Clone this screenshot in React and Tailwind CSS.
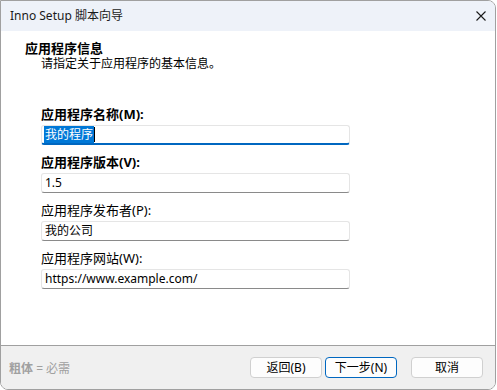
import React from "react";

const FONT = { fontFamily: '"Noto Sans", "Noto Sans CJK SC", sans-serif' };

const FIELDS = [
  { label: "应用程序名称", key: "(M):", value: "我的程序", bold: true, focused: true },
  { label: "应用程序版本", key: "(V):", value: "1.5", bold: true },
  { label: "应用程序发布者", key: "(P):", value: "我的公司" },
  { label: "应用程序网站", key: "(W):", value: "https://www.example.com/" },
];

function Field({ field }) {
  return (
    <div className="mb-[9px]">
      <div className={`h-[16px] leading-[16px] text-[13px] text-black ${field.bold ? "font-bold" : ""}`}>
        {field.label}
        <span className={field.bold ? "font-bold" : ""}>{field.key}</span>
      </div>
      <div
        className={`mt-[3px] h-[20px] w-[309px] rounded-[3px] border border-[#e5e5e5] bg-white flex items-center pl-[2px] text-[12px] text-black ${
          field.focused ? "border-b-2 border-b-[#0067c0]" : "border-b-[#8a8a8a]"
        }`}
      >
        {field.focused ? (
          <>
            <span className="bg-[#0078d7] text-white leading-[17px] px-px">{field.value}</span>
            <span className="w-px h-[15px] bg-black" />
          </>
        ) : (
          <span className="pl-[1px]">{field.value}</span>
        )}
      </div>
    </div>
  );
}

function Button({ children, primary }) {
  return (
    <button
      className={`w-[72px] h-[21px] rounded-[4px] bg-[#fdfdfd] text-[12px] text-black flex items-center justify-center border ${
        primary ? "border-[#0067c0]" : "border-[#d0d0d0]"
      }`}
    >
      {children}
    </button>
  );
}

export default function App() {
  return (
    <div className="w-[497px] h-[390px] bg-white" style={FONT}>
      <div className="w-[496px] h-[390px] flex flex-col border border-[#a0a0a0] rounded-tr-[8px] rounded-b-[8px] overflow-hidden">
        {/* Barre de titre */}
        <div className="h-[30px] bg-[#eef2f9] flex items-center justify-between pl-[9px] pr-[8px]">
          <span className="text-[12px] text-[#1a1a1a]">Inno Setup 脚本向导</span>
          <svg width="10" height="10" viewBox="0 0 10 10" className="mr-[1px] mb-[1px]">
            <path d="M0.5 0.5 L9.5 9.5 M9.5 0.5 L0.5 9.5" stroke="#1a1a1a" strokeWidth="1.1" fill="none" />
          </svg>
        </div>

        {/* Contenu */}
        <div className="h-[314px] bg-white">
          <div className="pl-[24px] pt-[9px]">
            <div className="text-[13px] leading-[16px] font-bold text-black">应用程序信息</div>
            <div className="pl-[16px] text-[12px] leading-[16px] text-black">请指定关于应用程序的基本信息。</div>
          </div>
          <div className="pl-[40px] pt-[34px]">
            {FIELDS.map((f) => (
              <Field key={f.key} field={f} />
            ))}
          </div>
        </div>

        {/* Pied */}
        <div className="h-[44px] border-t border-[#a0a0a0] bg-[#f0f0f0] flex items-center justify-between pl-[8px] pr-[12px]">
          <span className="text-[12px] text-[#a0a0a0] pt-[3px]">
            <span className="font-bold">粗体</span> = 必需
          </span>
          <div className="flex items-center">
            <Button>返回(B)</Button>
            <div className="ml-[3px]">
              <Button primary>下一步(N)</Button>
            </div>
            <div className="ml-[14px]">
              <Button>取消</Button>
            </div>
          </div>
        </div>
      </div>
    </div>
  );
}
